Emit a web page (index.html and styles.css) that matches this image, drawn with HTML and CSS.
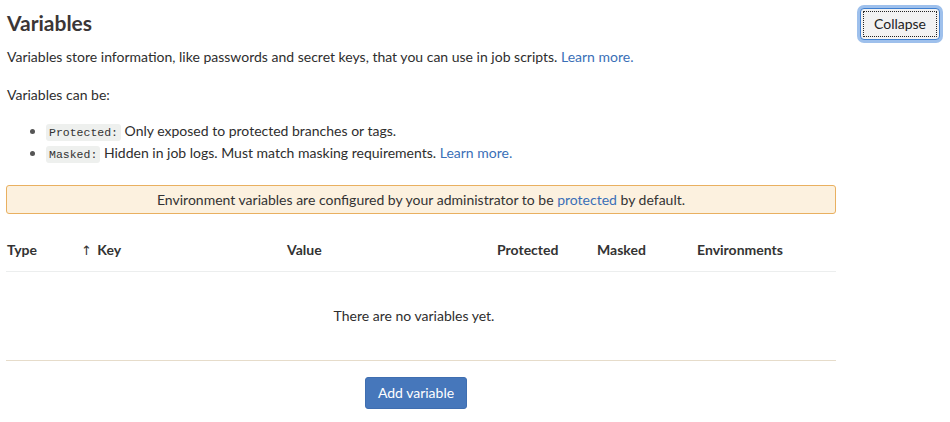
FILE: index.html
```html
<!DOCTYPE html>
<html>
<head>
<meta charset="utf-8">
<link rel="stylesheet" href="styles.css">
</head>
<body>
<section class="settings">
  <div class="settings-header">
    <h4 class="title">Variables</h4>
    <button class="btn-collapse">Collapse</button>
  </div>
  <div class="settings-content">
    <p class="lead">Variables store information, like passwords and secret keys, that you can use in job scripts. <a href="#">Learn more.</a></p>
    <p class="can-be">Variables can be:</p>
    <ul class="kinds">
      <li><code>Protected:</code> Only exposed to protected branches or tags.</li>
      <li><code>Masked:</code> Hidden in job logs. Must match masking requirements. <a href="#">Learn more.</a></li>
    </ul>
    <div class="alert">Environment variables are configured by your administrator to be <a href="#">protected</a> by default.</div>
    <div class="table">
      <div class="thead">
        <div class="th">Type</div>
        <div class="th"><span class="arrow">↑</span> Key</div>
        <div class="th">Value</div>
        <div class="th">Protected</div>
        <div class="th">Masked</div>
        <div class="th">Environments</div>
      </div>
      <div class="empty">There are no variables yet.</div>
    </div>
    <div class="actions">
      <button class="btn-add">Add variable</button>
    </div>
  </div>
</section>
</body>
</html>
```

FILE: styles.css
```css
html, body {
  margin: 0;
  padding: 0;
  background: #ffffff;
}
body {
  font-family: Lato, "Open Sans", sans-serif;
  font-size: 14px;
  line-height: 20px;
  color: #2e2e2e;
}
a {
  color: #3a6fb7;
  text-decoration: none;
}
.settings {
  padding: 6px 9px 0 6px;
}
.settings-header {
  display: flex;
  justify-content: space-between;
  align-items: center;
  height: 34px;
}
.title {
  margin: 0;
  padding-left: 1px;
  font-size: 21px;
  font-weight: 700;
  color: #3b3636;
  line-height: 24px;
}
.btn-collapse {
  font-family: inherit;
  font-size: 14px;
  color: #222;
  background: #f2f2f2;
  border: 1px solid #3e7fd0;
  border-radius: 4px;
  box-shadow: 0 0 0 3px #9ec0ec;
  outline: 1px dotted #222;
  outline-offset: -4px;
  height: 32px;
  width: 80px;
  padding: 0 8px;
  margin-top: 1px;
  margin-right: 1px;
}
.settings-content {
  width: 830px;
}
.lead {
  margin: 7px 0 18px 1px;
}
.can-be {
  margin: 0 0 15px 1px;
}
.kinds {
  margin: 0 0 21px 0;
  padding-left: 40px;
}
.kinds li {
  line-height: 22px;
}
.kinds li::marker {
  color: #555;
}
code {
  font-family: "Liberation Mono", "DejaVu Sans Mono", monospace;
  font-size: 11.5px;
  line-height: 14px;
  color: #333;
  background: #eef0ee;
  border-radius: 3px;
  padding: 2px 3px;
}
.alert {
  background: #fcf1df;
  border: 1px solid #e9b060;
  border-radius: 3px;
  text-align: center;
  padding: 4px 16px 3px;
  color: #333;
}
.table {
  margin-top: 16px;
}
.thead {
  display: grid;
  grid-template-columns: 74px 206px 210px 100px 100px 1fr;
  border-bottom: 1px solid #eceeee;
}
.th {
  padding: 10px 1px;
  font-weight: 700;
  color: #333;
}
.arrow {
  font-family: "DejaVu Sans", sans-serif;
  font-weight: 400;
  font-size: 13px;
  margin-right: 2px;
}
.empty {
  text-align: center;
  padding: 34px 14px 34px 0;
  border-bottom: 1px solid #e6dcca;
}
.actions {
  display: flex;
  justify-content: center;
  padding-top: 16px;
  padding-right: 10px;
}
.btn-add {
  font-family: inherit;
  font-size: 14px;
  line-height: 20px;
  color: #ffffff;
  background: #4677bb;
  border: 1px solid #3f6eb0;
  border-radius: 3px;
  padding: 5px 12px;
}
```
